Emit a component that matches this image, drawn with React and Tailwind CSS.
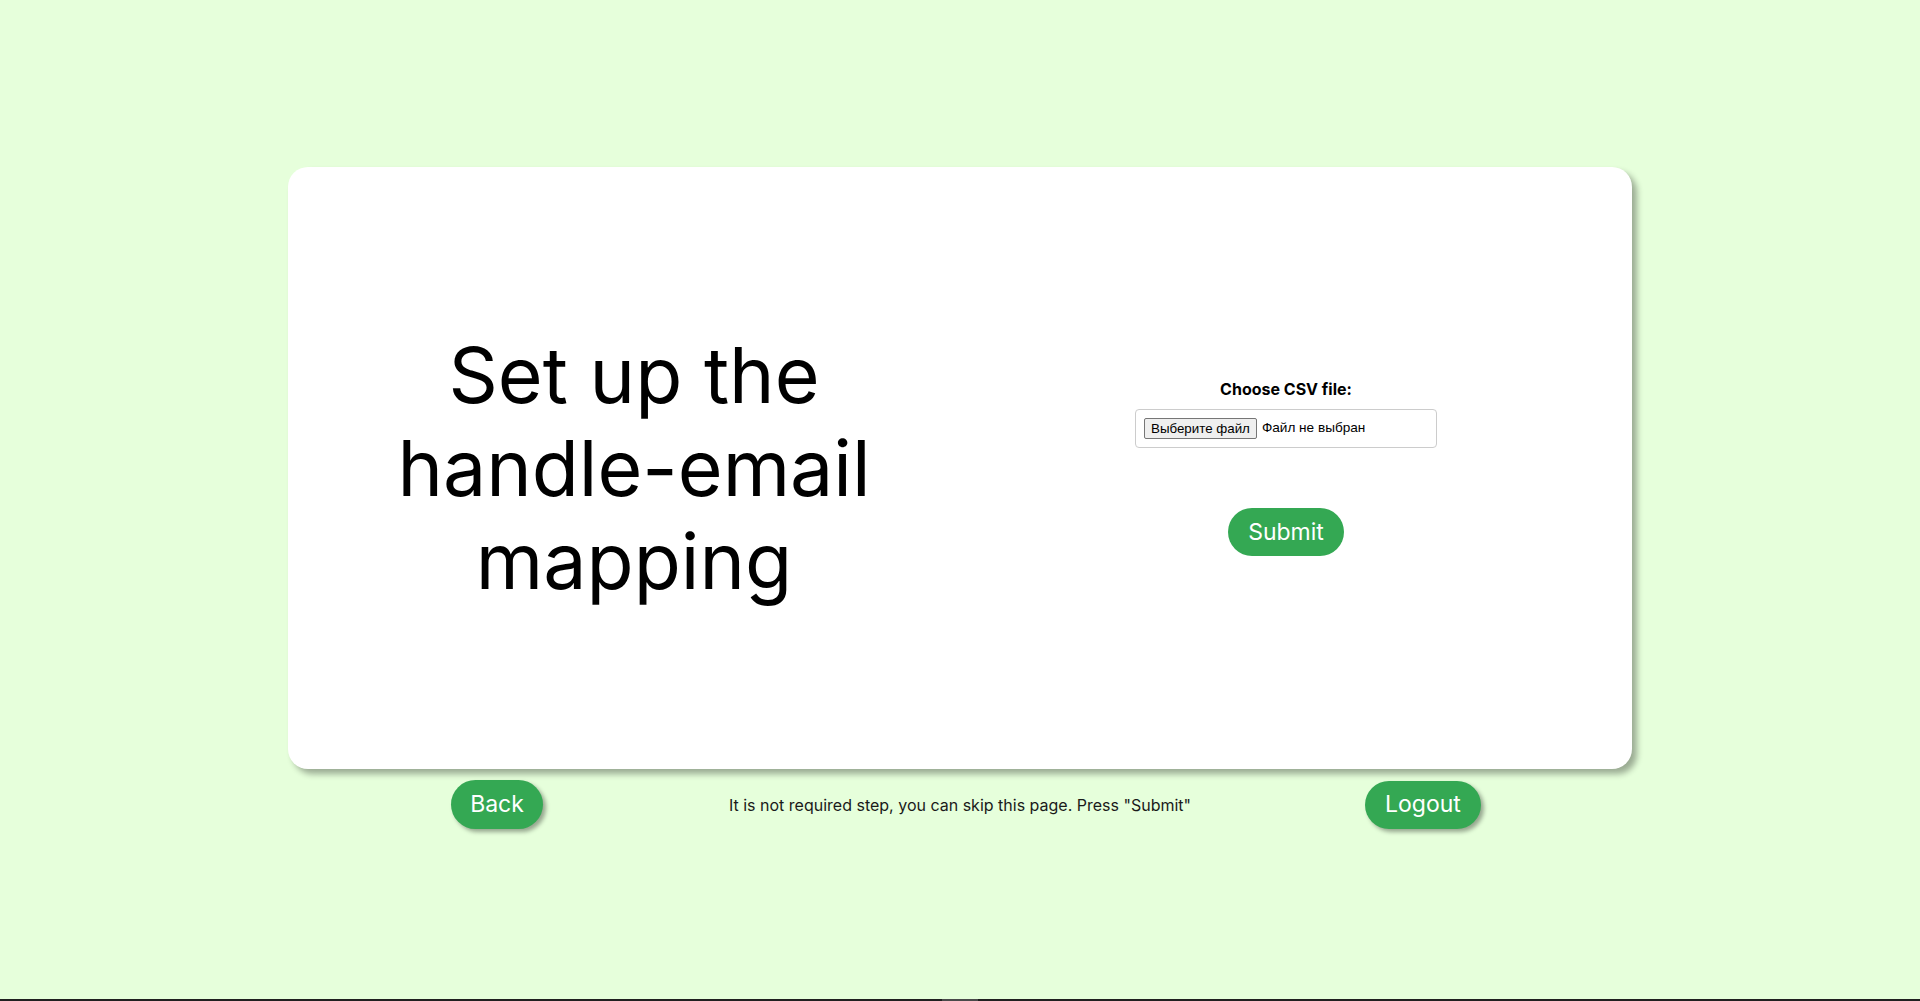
export default function App() {
  return (
    <div className="h-[1001px] flex flex-col bg-[#e6ffdb] overflow-hidden" style={{ fontFamily: 'Inter, "Noto Sans", sans-serif' }}>
      <div className="flex-1 pt-[167px]">
        {/* Card */}
        <div className="mx-auto w-[1344px] h-[602px] bg-white rounded-[20px] shadow-[5px_5px_6px_rgba(0,0,0,0.33)] px-[20px] flex">
          <div className="flex-1 flex items-center justify-center">
            <h1 className="text-center text-black font-normal text-[77px] leading-[93px] w-[540px]">
              Set up the handle-email mapping
            </h1>
          </div>
          <div className="flex-1 flex flex-col items-center justify-center pb-[3px]">
            <label className="text-[16px] leading-[24px] font-bold text-black">Choose CSV file:</label>
            <div className="mt-[8px] w-[302px] h-[39px] border border-[#cccccc] rounded-[4px] flex items-center px-[8px]">
              <button
                className="h-[21px] px-[6px] bg-[#efefef] border border-[#767676] rounded-[2px] text-[13.33px] leading-none text-black"
                style={{ fontFamily: '"Liberation Sans", Arial, sans-serif' }}
              >
                Выберите файл
              </button>
              <span className="ml-[5px] text-[13.6px] text-black" style={{ fontFamily: '"Liberation Sans", Arial, sans-serif' }}>
                Файл не выбран
              </span>
            </div>
            <button className="mt-[60px] h-[48px] px-[20px] rounded-full bg-[#34a853] text-white text-[23px] leading-none">
              Submit
            </button>
          </div>
        </div>

        {/* Bottom row */}
        <div className="mx-auto mt-[11px] w-[1389px] grid grid-cols-3 items-center justify-items-center">
          <button className="h-[49px] px-[19px] rounded-full bg-[#34a853] text-white text-[23px] leading-none shadow-[3px_3px_4px_rgba(0,0,0,0.35)]">
            Back
          </button>
          <p className="text-[16px] text-[#1a1a1a] whitespace-nowrap">
            It is not required step, you can skip this page. Press "Submit"
          </p>
          <button className="h-[48px] px-[20px] rounded-full bg-[#34a853] text-white text-[23px] leading-none shadow-[3px_3px_4px_rgba(0,0,0,0.35)]">
            Logout
          </button>
        </div>
      </div>
      <div className="h-[2px] bg-[#202020] flex justify-center">
        <div className="w-[36px] h-full bg-[#4a4a4a]"></div>
      </div>
    </div>
  );
}
